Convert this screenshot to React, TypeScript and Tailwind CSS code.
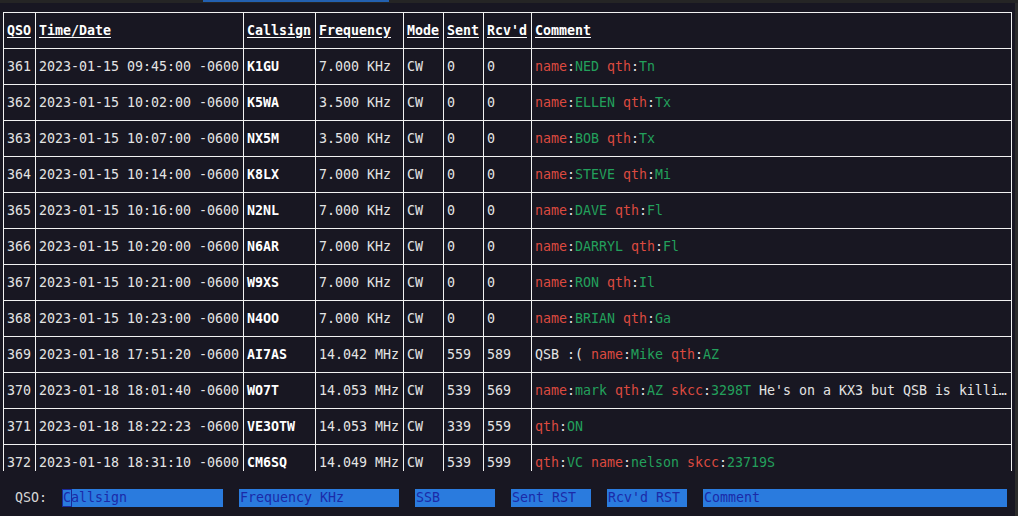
import React from "react";

// contact log rows: qso, time, call, freq, mode, sent, rcvd, comment
const qsos = [
  ["361", "2023-01-15 09:45:00 -0600", "K1GU", "7.000 KHz", "CW", "0", "0", "name:NED qth:Tn"],
  ["362", "2023-01-15 10:02:00 -0600", "K5WA", "3.500 KHz", "CW", "0", "0", "name:ELLEN qth:Tx"],
  ["363", "2023-01-15 10:07:00 -0600", "NX5M", "3.500 KHz", "CW", "0", "0", "name:BOB qth:Tx"],
  ["364", "2023-01-15 10:14:00 -0600", "K8LX", "7.000 KHz", "CW", "0", "0", "name:STEVE qth:Mi"],
  ["365", "2023-01-15 10:16:00 -0600", "N2NL", "7.000 KHz", "CW", "0", "0", "name:DAVE qth:Fl"],
  ["366", "2023-01-15 10:20:00 -0600", "N6AR", "7.000 KHz", "CW", "0", "0", "name:DARRYL qth:Fl"],
  ["367", "2023-01-15 10:21:00 -0600", "W9XS", "7.000 KHz", "CW", "0", "0", "name:RON qth:Il"],
  ["368", "2023-01-15 10:23:00 -0600", "N4OO", "7.000 KHz", "CW", "0", "0", "name:BRIAN qth:Ga"],
  ["369", "2023-01-18 17:51:20 -0600", "AI7AS", "14.042 MHz", "CW", "559", "589", "QSB :( name:Mike qth:AZ"],
  ["370", "2023-01-18 18:01:40 -0600", "WO7T", "14.053 MHz", "CW", "539", "569", "name:mark qth:AZ skcc:3298T He's on a KX3 but QSB is killi…"],
  ["371", "2023-01-18 18:22:23 -0600", "VE3OTW", "14.053 MHz", "CW", "339", "559", "qth:ON"],
  ["372", "2023-01-18 18:31:10 -0600", "CM6SQ", "14.049 MHz", "CW", "539", "599", "qth:VC name:nelson skcc:23719S"],
];

const headers = ["QSO", "Time/Date", "Callsign", "Frequency", "Mode", "Sent", "Rcv'd", "Comment"];
const widths = ["w-[32px]", "w-[208px]", "w-[72px]", "w-[88px]", "w-[40px]", "w-[40px]", "w-[48px]", "w-[480px]"];

function Comment({ text }: { text: string }) {
  const tokens = text.split(" ");
  return (
    <>
      {tokens.map((tok, i) => {
        const m = tok.match(/^(\w+):(\S+)$/);
        const sp = i < tokens.length - 1 ? " " : "";
        if (!m) return <span key={i}>{tok + sp}</span>;
        return (
          <span key={i}>
            <span className="text-[#dc4a40]">{m[1]}</span>:
            <span className="text-[#23a05c]">{m[2]}</span>
            {sp}
          </span>
        );
      })}
    </>
  );
}

function Field({ label, w, cursor }: { label: string; w: string; cursor?: boolean }) {
  return (
    <div className={`${w} h-[18px] bg-[#2a7bde] text-[#1b2aa8] flex items-center pl-px whitespace-pre`}>
      {cursor ? (
        <>
          <span className="relative">
            {label[0]}
            <span className="absolute -left-px -right-px top-[-1px] bottom-[-1px] border border-[#1a2a9a]" />
          </span>
          {label.slice(1)}
        </>
      ) : (
        label
      )}
    </div>
  );
}

export default function App() {
  return (
    <div
      className="w-[1018px] h-[516px] bg-[#181722] text-[#e4e4e4] flex flex-col overflow-hidden text-[13.29px] leading-[16px]"
      style={{ fontFamily: "'DejaVu Sans Mono', 'Liberation Mono', monospace" }}
    >
      <div className="h-[3px] bg-[#252525] shrink-0">
        <div className="ml-[203px] w-[186px] h-[2px] bg-[#2360b0]" />
      </div>
      <div className="flex flex-1 min-h-0">
        <div className="flex-1 flex flex-col min-w-0">
          <div className="h-[468px] overflow-hidden pt-[9px] pl-[3px]">
            <div className="w-[1009px] border-l border-t border-[#f2f2f2]">
              <div className="flex">
                {headers.map((h, i) => (
                  <div
                    key={h}
                    className={`${widths[i]} h-[36px] shrink-0 border-r border-b border-[#f2f2f2] pl-[3px] flex items-center font-bold underline underline-offset-2 text-white`}
                  >
                    {h}
                  </div>
                ))}
              </div>
              {qsos.map((r) => (
                <div key={r[0]} className="flex">
                  {r.map((c, i) => (
                    <div
                      key={i}
                      className={`${widths[i]} h-[36px] shrink-0 border-r border-b border-[#f2f2f2] pl-[3px] pr-[4px] pt-px flex items-center whitespace-pre ${i === 2 ? "font-bold text-white" : ""}`}
                    >
                      {i === 7 ? <Comment text={c} /> : c}
                    </div>
                  ))}
                </div>
              ))}
            </div>
          </div>
          <div className="h-[45px] pt-[18px] pl-[15px] flex items-start">
            <span className="h-[18px] flex items-center mr-[15px] text-[#d6d6d6]">QSO:</span>
            <div className="flex gap-4">
              <Field label="Callsign" w="w-[161px]" cursor />
              <Field label="Frequency KHz" w="w-[160px]" />
              <Field label="SSB" w="w-[80px]" />
              <Field label="Sent RST" w="w-[80px]" />
              <Field label="Rcv'd RST" w="w-[80px]" />
              <Field label="Comment" w="w-[304px]" />
            </div>
          </div>
        </div>
        <div className="w-[3px] bg-[#2c2c2c] shrink-0" />
      </div>
    </div>
  );
}
